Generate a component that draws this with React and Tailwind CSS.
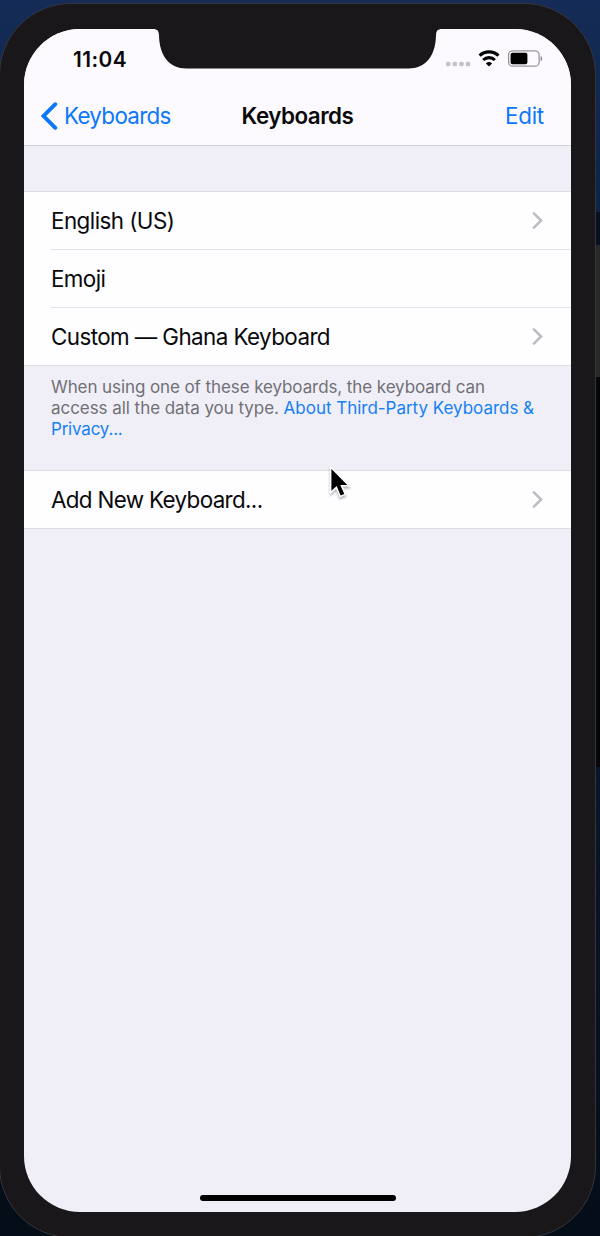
import React from "react";

function Disclosure() {
  return (
    <svg className="mr-[28px] h-[18px] w-[11px] shrink-0" viewBox="0 0 11 18" fill="none">
      <path d="M1.9 1.4 9.1 8.5l-7.2 7.1" stroke="#bdbdc1" strokeWidth="2.6" strokeLinecap="round" strokeLinejoin="miter" />
    </svg>
  );
}

function Row({ children, divider, chevron, tracking }) {
  return (
    <div className={"pl-[27px] " + (divider ? "h-[58px]" : "h-[57px]")}>
      <div className={"flex h-full items-center justify-between " + (divider ? "border-b border-[#e4e3e8]" : "")}>
        <span className={"pt-px whitespace-nowrap text-[22.4px] leading-[30px] " + tracking}>{children}</span>
        {chevron && <Disclosure />}
      </div>
    </div>
  );
}

function StatusIcons() {
  return (
    <svg className="h-[24px] w-[100px]" viewBox="444 46 100 24">
      <g fill="#c3c2c8">
        <rect x="446" y="61.7" width="4.5" height="4.5" rx="1.5" />
        <rect x="452.6" y="61.7" width="4.5" height="4.5" rx="1.5" />
        <rect x="459.2" y="61.7" width="4.5" height="4.5" rx="1.5" />
        <rect x="465.8" y="61.7" width="4.5" height="4.5" rx="1.5" />
      </g>
      <g fill="none" stroke="#000" strokeWidth="3.1">
        <path d="M479.6 55.7a13.7 13.7 0 0 1 18.9 0" />
        <path d="M483.2 60a8.5 8.5 0 0 1 11.7 0" />
      </g>
      <path d="M489 66.6l-3.1-3.2a4.5 4.5 0 0 1 6.2 0z" fill="#000" />
      <rect x="508.6" y="50.8" width="30.5" height="15.4" rx="4" fill="none" stroke="#98979c" strokeWidth="1.3" />
      <rect x="510.6" y="52.8" width="16.8" height="11.4" rx="1.9" fill="#000" />
      <path d="M540.6 56v5.2c2.1-.9 2.1-4.3 0-5.2z" fill="#88878c" />
    </svg>
  );
}

function Notch() {
  return (
    <svg className="absolute top-0 left-[129px] h-[41px] w-[290px]" viewBox="0 0 290 41">
      <path d="M0 0C4.7 0 5.8 2.1 6 6.5C6.4 27 16.5 39.5 33.5 39.5H255.5C272.5 39.5 282.6 27 283 6.5C283.2 2.1 284.3 0 289 0Z" fill="#19171a" />
    </svg>
  );
}

export default function App() {
  return (
    <div className="relative h-[1236px] w-[600px] overflow-hidden bg-linear-to-b from-[#142c57] from-0% via-[#0d2140] via-20% to-[#050d18] to-100% font-['Inter',sans-serif] text-[#09090b]">
      <div className="absolute top-[212px] right-0 h-[33px] w-[10px] bg-[#07101e]" />
      <div className="absolute top-[245px] right-0 h-[132px] w-[10px] bg-[#292829]" />
      <div className="absolute top-[377px] right-0 h-[390px] w-[10px] bg-[#060709]" />
      <div className="relative -ml-px h-[1235px] w-[597px] translate-y-[3px] rounded-[72px] border border-[#34363c] bg-[#19171a] pt-[25px] pl-[24px]">
        <div className="relative flex h-[1183px] w-[547px] flex-col overflow-hidden rounded-[56px] bg-[#f0eff8]">
          <div className="h-[117px] shrink-0 border-b border-[#d3d1d8] bg-[#fcf9ff]">
            <div className="flex h-[58px] items-start justify-between pr-[27px] pl-[49px]">
              <span className="mt-[18px] text-[20.8px] leading-[26px] font-semibold tracking-[0.45px] whitespace-nowrap">11:04</span>
              <div className="mt-[17px]"><StatusIcons /></div>
            </div>
            <div className="grid h-[58px] grid-cols-3 items-center pr-[27px] pl-[17px] text-[22.4px] leading-[30px]">
              <div className="flex items-center text-[#0b77fa]">
                <svg className="mr-[6px] h-[28px] w-[17px]" viewBox="0 0 17 28" fill="none">
                  <path d="M14.3 2.2 2.4 14l11.9 11.8" stroke="currentColor" strokeWidth="3.9" strokeLinecap="round" strokeLinejoin="miter" />
                </svg>
                <span className="tracking-[-0.7px]">Keyboards</span>
              </div>
              <span className="ml-[10px] text-center font-semibold tracking-[-0.5px]">Keyboards</span>
              <span className="text-right tracking-[-0.2px] text-[#0b77fa]">Edit</span>
            </div>
          </div>
          <div className="mt-[45px] border-y border-[#dddce2] bg-[#fefdff]">
            <Row divider chevron tracking="tracking-[-0.55px]">English (US)</Row>
            <Row divider tracking="tracking-[-0.6px]">Emoji</Row>
            <Row chevron tracking="tracking-[-0.58px]">Custom — Ghana Keyboard</Row>
          </div>
          <div className="h-[104px] shrink-0 pt-[11px] pl-[27px] text-[17px] leading-[21px] whitespace-nowrap text-[#707075]">
            <div className="tracking-[-0.09px]">When using one of these keyboards, the keyboard can</div>
            <div className="tracking-[-0.05px]">access all the data you type. <span className="tracking-[-0.02px] text-[#1680f5]">About Third-Party Keyboards &amp;</span></div>
            <div className="tracking-[-0.2px] text-[#1680f5]">Privacy...</div>
          </div>
          <div className="border-y border-[#dddce2] bg-[#fefdff]">
            <Row chevron tracking="tracking-[-0.65px]">Add New Keyboard...</Row>
          </div>
          <div className="mt-auto mb-[11px] ml-[176px] h-[6.5px] w-[196px] rounded-full bg-black" />
          <Notch />
        </div>
      </div>
      <svg className="absolute top-[464px] left-[327px] h-[36px] w-[24px] drop-shadow-[0_2px_1px_rgba(0,0,0,0.3)]" viewBox="0 0 24 36">
        <path d="M3.6 3v25.6l5.8-5.2 3.8 9.1 5.2-2.1-3.9-8.7h7.6z" fill="#000" stroke="#fff" strokeWidth="1.6" strokeLinejoin="miter" />
      </svg>
    </div>
  );
}
